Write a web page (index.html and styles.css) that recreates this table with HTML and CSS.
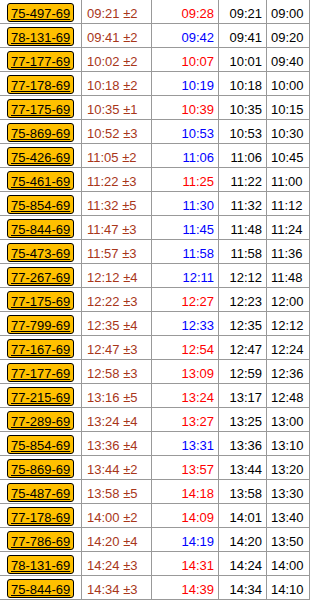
FILE: index.html
```html
<!DOCTYPE html>
<html lang="ru">
<head>
    <meta charset="UTF-8">
    <meta name="viewport" content="width=device-width, initial-scale=1.0">
    <title>Расписание</title>
    <link rel="stylesheet" href="styles.css">
</head>
<body>
    <table class="schedule">
        <colgroup>
            <col class="c-plate">
            <col class="c-est">
            <col class="c-fact">
            <col class="c-calc">
            <col class="c-plan">
        </colgroup>
        <tbody>
            <tr><td><a class="plate" href="#">75-497-69</a></td><td class="est">09:21 ±2</td><td class="fact late">09:28</td><td class="calc">09:21</td><td class="plan">09:00</td></tr>
            <tr><td><a class="plate" href="#">78-131-69</a></td><td class="est">09:41 ±2</td><td class="fact early">09:42</td><td class="calc">09:41</td><td class="plan">09:20</td></tr>
            <tr><td><a class="plate" href="#">77-177-69</a></td><td class="est">10:02 ±2</td><td class="fact late">10:07</td><td class="calc">10:01</td><td class="plan">09:40</td></tr>
            <tr><td><a class="plate" href="#">77-178-69</a></td><td class="est">10:18 ±2</td><td class="fact early">10:19</td><td class="calc">10:18</td><td class="plan">10:00</td></tr>
            <tr><td><a class="plate" href="#">77-175-69</a></td><td class="est">10:35 ±1</td><td class="fact late">10:39</td><td class="calc">10:35</td><td class="plan">10:15</td></tr>
            <tr><td><a class="plate" href="#">75-869-69</a></td><td class="est">10:52 ±3</td><td class="fact early">10:53</td><td class="calc">10:53</td><td class="plan">10:30</td></tr>
            <tr><td><a class="plate" href="#">75-426-69</a></td><td class="est">11:05 ±2</td><td class="fact early">11:06</td><td class="calc">11:06</td><td class="plan">10:45</td></tr>
            <tr><td><a class="plate" href="#">75-461-69</a></td><td class="est">11:22 ±3</td><td class="fact late">11:25</td><td class="calc">11:22</td><td class="plan">11:00</td></tr>
            <tr><td><a class="plate" href="#">75-854-69</a></td><td class="est">11:32 ±5</td><td class="fact early">11:30</td><td class="calc">11:32</td><td class="plan">11:12</td></tr>
            <tr><td><a class="plate" href="#">75-844-69</a></td><td class="est">11:47 ±3</td><td class="fact early">11:45</td><td class="calc">11:48</td><td class="plan">11:24</td></tr>
            <tr><td><a class="plate" href="#">75-473-69</a></td><td class="est">11:57 ±3</td><td class="fact early">11:58</td><td class="calc">11:58</td><td class="plan">11:36</td></tr>
            <tr><td><a class="plate" href="#">77-267-69</a></td><td class="est">12:12 ±4</td><td class="fact early">12:11</td><td class="calc">12:12</td><td class="plan">11:48</td></tr>
            <tr><td><a class="plate" href="#">77-175-69</a></td><td class="est">12:22 ±3</td><td class="fact late">12:27</td><td class="calc">12:23</td><td class="plan">12:00</td></tr>
            <tr><td><a class="plate" href="#">77-799-69</a></td><td class="est">12:35 ±4</td><td class="fact early">12:33</td><td class="calc">12:35</td><td class="plan">12:12</td></tr>
            <tr><td><a class="plate" href="#">77-167-69</a></td><td class="est">12:47 ±3</td><td class="fact late">12:54</td><td class="calc">12:47</td><td class="plan">12:24</td></tr>
            <tr><td><a class="plate" href="#">77-177-69</a></td><td class="est">12:58 ±3</td><td class="fact late">13:09</td><td class="calc">12:59</td><td class="plan">12:36</td></tr>
            <tr><td><a class="plate" href="#">77-215-69</a></td><td class="est">13:16 ±5</td><td class="fact late">13:24</td><td class="calc">13:17</td><td class="plan">12:48</td></tr>
            <tr><td><a class="plate" href="#">77-289-69</a></td><td class="est">13:24 ±4</td><td class="fact late">13:27</td><td class="calc">13:25</td><td class="plan">13:00</td></tr>
            <tr><td><a class="plate" href="#">75-854-69</a></td><td class="est">13:36 ±4</td><td class="fact early">13:31</td><td class="calc">13:36</td><td class="plan">13:10</td></tr>
            <tr><td><a class="plate" href="#">75-869-69</a></td><td class="est">13:44 ±2</td><td class="fact late">13:57</td><td class="calc">13:44</td><td class="plan">13:20</td></tr>
            <tr><td><a class="plate" href="#">75-487-69</a></td><td class="est">13:58 ±5</td><td class="fact late">14:18</td><td class="calc">13:58</td><td class="plan">13:30</td></tr>
            <tr><td><a class="plate" href="#">77-178-69</a></td><td class="est">14:00 ±2</td><td class="fact late">14:09</td><td class="calc">14:01</td><td class="plan">13:40</td></tr>
            <tr><td><a class="plate" href="#">77-786-69</a></td><td class="est">14:20 ±4</td><td class="fact early">14:19</td><td class="calc">14:20</td><td class="plan">13:50</td></tr>
            <tr><td><a class="plate" href="#">78-131-69</a></td><td class="est">14:24 ±3</td><td class="fact late">14:31</td><td class="calc">14:24</td><td class="plan">14:00</td></tr>
            <tr><td><a class="plate" href="#">75-844-69</a></td><td class="est">14:34 ±3</td><td class="fact late">14:39</td><td class="calc">14:34</td><td class="plan">14:10</td></tr>
        </tbody>
    </table>
</body>
</html>
```

FILE: styles.css
```css
body {
    margin: 0;
    font-family: "Liberation Sans", Arial, sans-serif;
    font-size: 13px;
    color: #000;
    background: #fff;
}

.schedule {
    width: 310px;
    table-layout: fixed;
    border-collapse: separate;
    border-spacing: 0;
}

.c-plate { width: 82px; }
.c-est { width: 70px; }
.c-fact { width: 67px; }
.c-calc { width: 48px; }
.c-plan { width: 43px; }

.schedule td {
    box-sizing: border-box;
    height: 24px;
    padding: 5px 0 0 0;
    line-height: 18px;
    white-space: nowrap;
    border-right: 1px solid #999;
    border-bottom: 1px solid #999;
    vertical-align: top;
}

.schedule td:first-child {
    padding: 3px 0 0 7px;
}

.plate {
    display: inline-block;
    padding: 2px 3px 0;
    line-height: 15px;
    color: #000;
    background: #ffc000;
    border: 1px solid #000;
    border-radius: 3px;
}

.est {
    padding-left: 5px !important;
    color: #a8361a;
}

.fact {
    text-align: right;
    padding-right: 4px !important;
}

.late { color: #f00; }
.early { color: #00f; }

.calc {
    text-align: right;
    padding-right: 4px !important;
}

.plan {
    padding-left: 4px !important;
}
```
